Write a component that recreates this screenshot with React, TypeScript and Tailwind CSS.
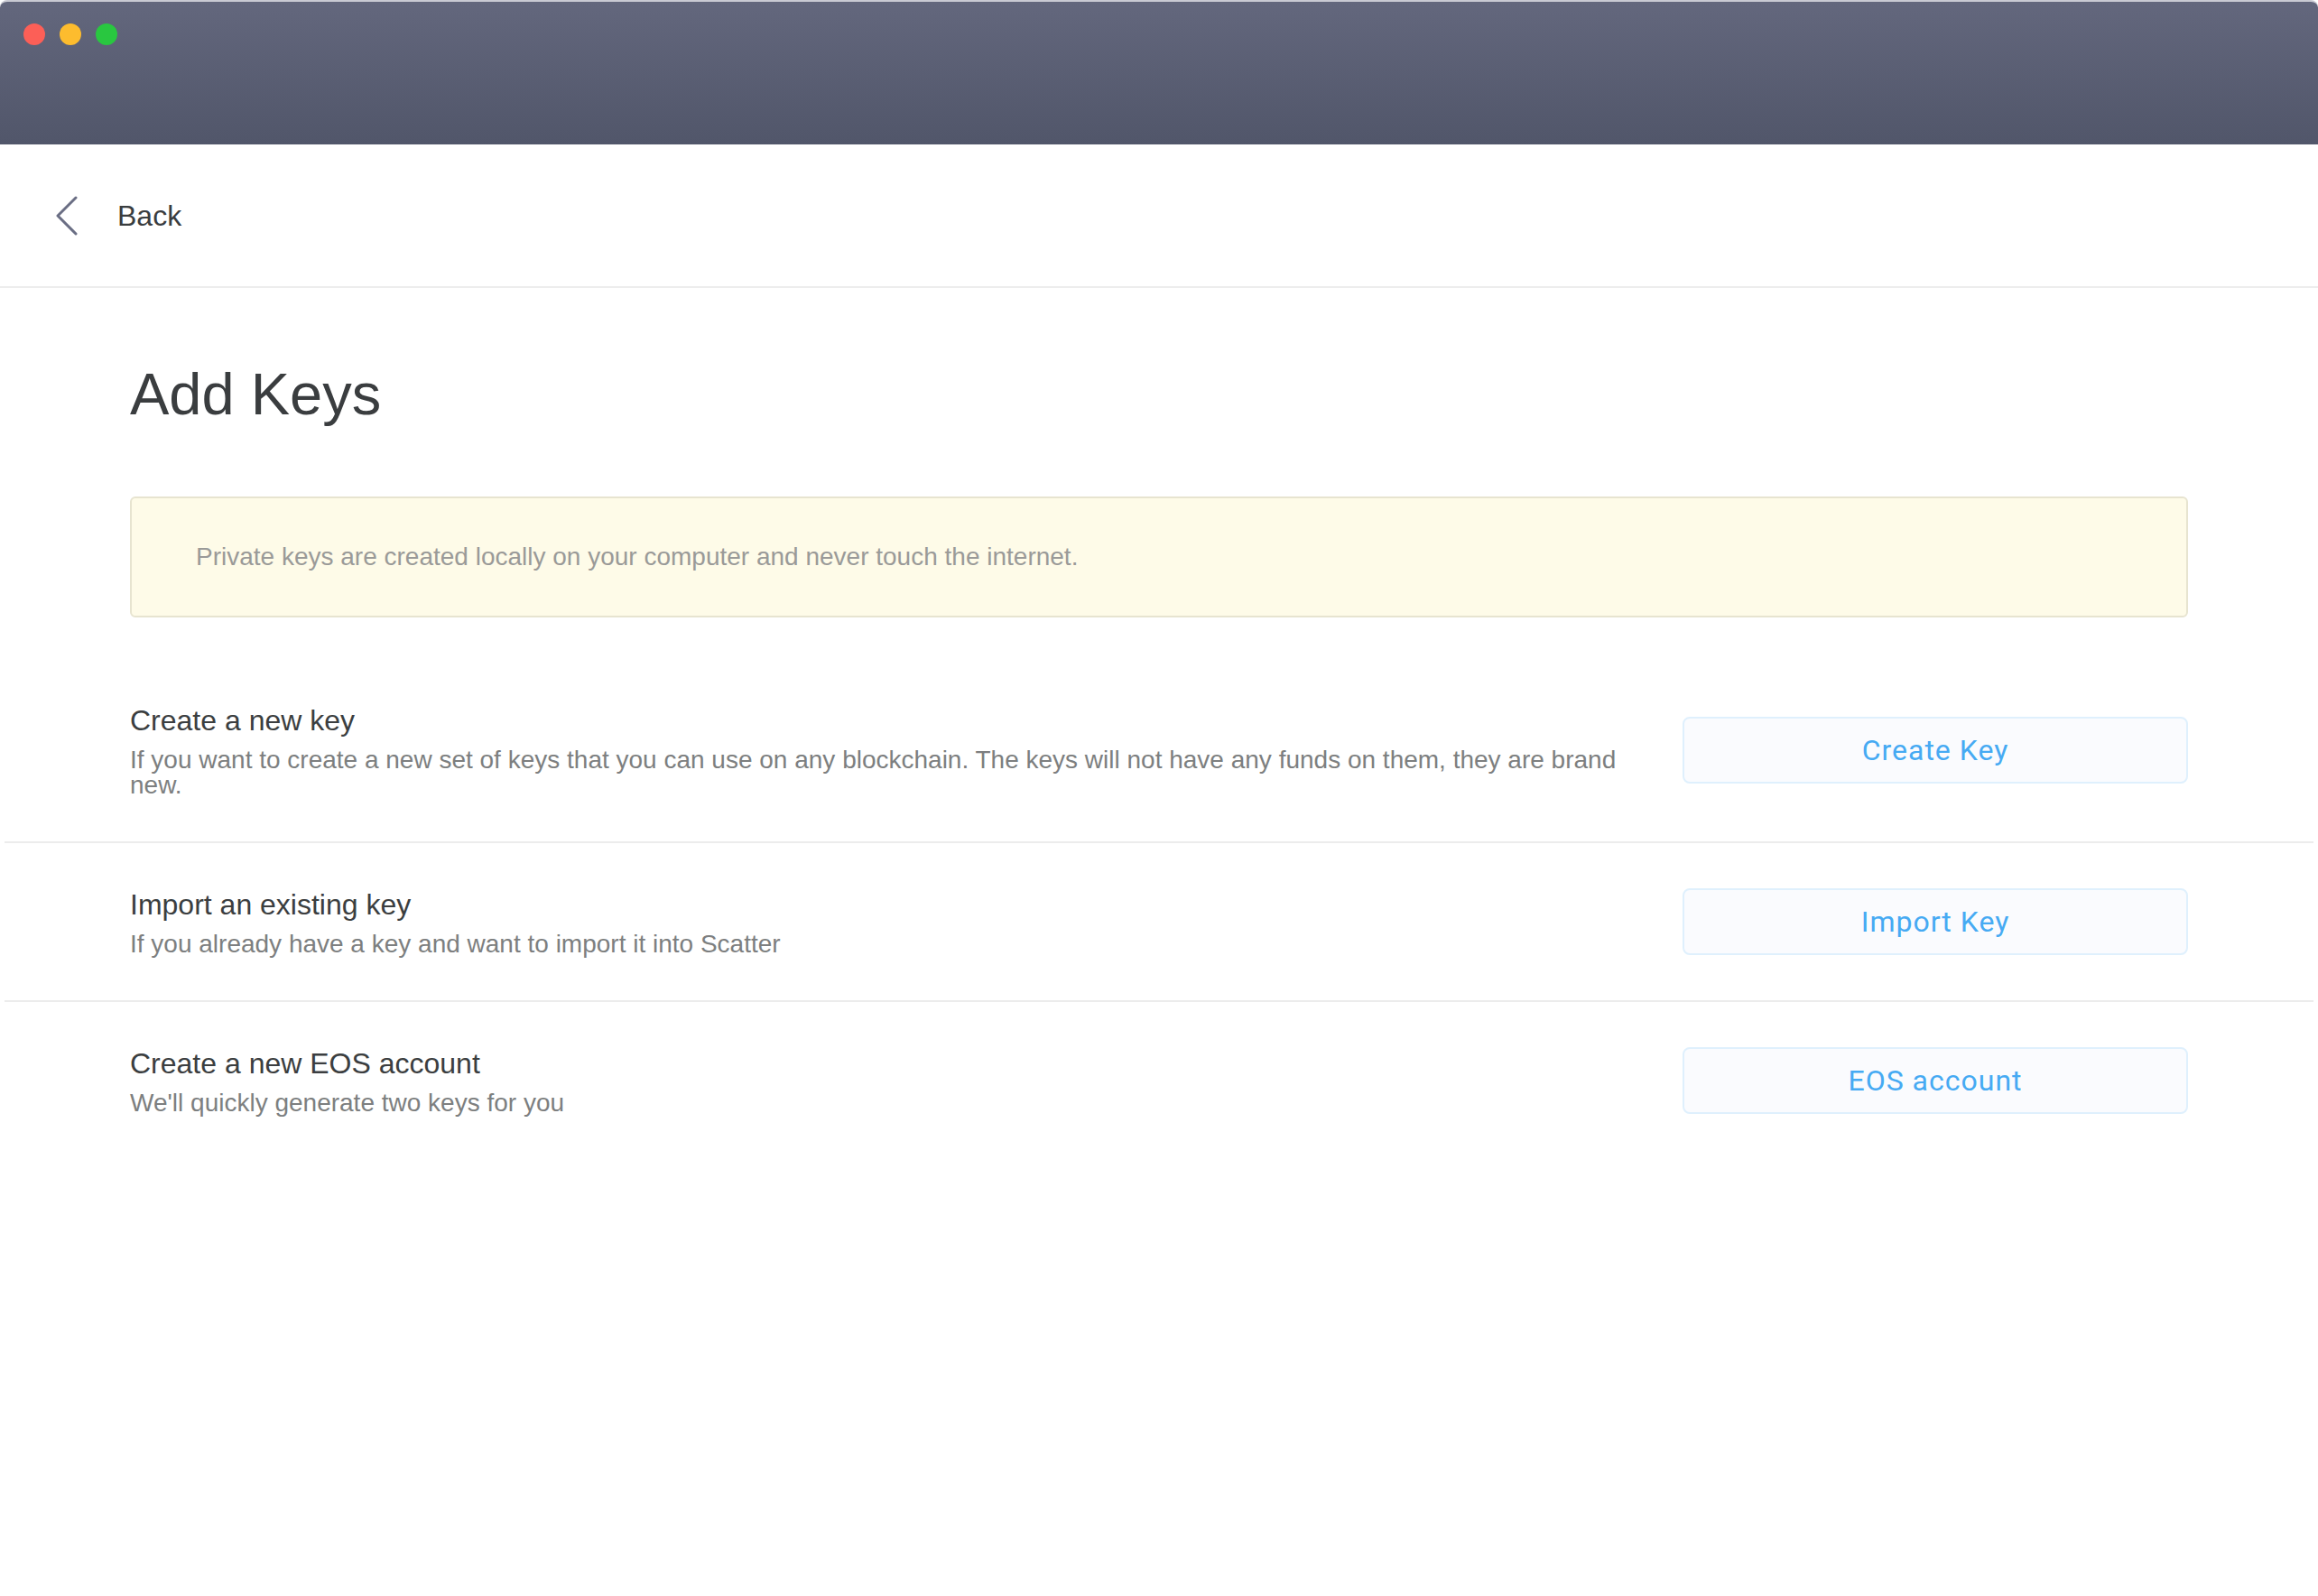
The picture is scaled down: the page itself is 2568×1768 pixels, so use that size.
type Option = {
  title: string;
  description: string;
  action: string;
};

const options: Option[] = [
  {
    title: "Create a new key",
    description:
      "If you want to create a new set of keys that you can use on any blockchain. The keys will not have any funds on them, they are brand new.",
    action: "Create Key",
  },
  {
    title: "Import an existing key",
    description: "If you already have a key and want to import it into Scatter",
    action: "Import Key",
  },
  {
    title: "Create a new EOS account",
    description: "We'll quickly generate two keys for you",
    action: "EOS account",
  },
];

function TitleBar() {
  return (
    <div className="h-[160px] rounded-t-[8px] border-t-2 border-[#c9cad3] bg-gradient-to-b from-[#63677d] to-[#51566a] flex gap-[16px] pl-[26px] pt-[24px]">
      <span className="w-[24px] h-[24px] rounded-full bg-[#fc5f57]" />
      <span className="w-[24px] h-[24px] rounded-full bg-[#fdbc2e]" />
      <span className="w-[24px] h-[24px] rounded-full bg-[#29c740]" />
    </div>
  );
}

function OptionRow({ option, last }: { option: Option; last: boolean }) {
  return (
    <div
      className={
        "flex items-center gap-[36px] px-[139px] py-[48px] mx-[5px] " +
        (last ? "" : "border-b-2 border-[#ececec]")
      }
    >
      <div className="flex-1 flex flex-col">
        <div className="text-[32px] leading-[40px] text-[#3b3e40] mb-[10px]">
          {option.title}
        </div>
        <div className="text-[28px] leading-[28px] text-[#7d7f80]">
          {option.description}
        </div>
      </div>
      <button className="w-[560px] h-[74px] shrink-0 rounded-[8px] border-2 border-[#dff0fd] bg-[#fafbfe] text-[#46aaf3] text-[32px] tracking-[1px] font-['Roboto',sans-serif]">
        {option.action}
      </button>
    </div>
  );
}

export default function App() {
  return (
    <div className="w-full min-h-screen bg-white font-['Liberation_Sans',Arial,sans-serif]">
      <TitleBar />

      <div className="h-[159px] border-b-2 border-[#ededed] flex items-center pl-[61px]">
        <svg width="26" height="44" viewBox="0 0 26 44" fill="none">
          <path
            d="M23 2 L3 22 L23 42"
            stroke="#6a6e84"
            strokeWidth="3"
            strokeLinecap="round"
            strokeLinejoin="round"
          />
        </svg>
        <span className="ml-[43px] text-[32px] text-[#3a3d3f]">Back</span>
      </div>

      <div className="pt-[85px]">
        <h1 className="px-[144px] text-[65px] leading-none text-[#3a3d3f] mb-[81px]">Add Keys</h1>

        <div className="mx-[144px] h-[134px] rounded-[6px] border-2 border-[#e7e4d0] bg-[#fefbe8] flex items-center pl-[71px]">
          <span className="text-[28px] text-[#9a9a98]">
            Private keys are created locally on your computer and never touch the internet.
          </span>
        </div>

        <div className="mt-[46px]">
          {options.map((option, i) => (
            <OptionRow key={option.action} option={option} last={i === options.length - 1} />
          ))}
        </div>
      </div>
    </div>
  );
}
